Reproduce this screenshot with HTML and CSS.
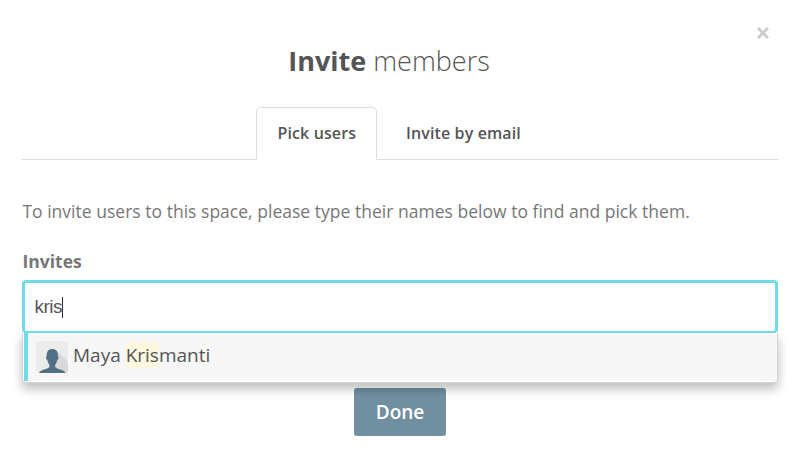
FILE: index.html
```html
<!DOCTYPE html>
<html lang="en">
<head>
<meta charset="utf-8">
<title>Invite members</title>
<link rel="stylesheet" href="styles.css">
</head>
<body>
<main class="modal">
  <button class="close" aria-label="Close"><svg width="14" height="14" viewBox="0 0 14 14"><path d="M2 2L12 12M12 2L2 12"/></svg></button>
  <h1 class="title"><strong>Invite</strong> <span>members</span></h1>
  <nav class="tabs">
    <a class="tab active">Pick users</a>
    <a class="tab">Invite by email</a>
  </nav>
  <p class="intro">To invite users to this space, please type their names below to find and pick them.</p>
  <div class="label">Invites</div>
  <div class="picker">
    <div class="field"><span class="query">kris</span><span class="caret"></span></div>
    <div class="results">
      <div class="result">
        <svg class="avatar" width="32" height="32" viewBox="0 0 32 32">
          <rect width="32" height="32" rx="3" fill="#ebebeb"/>
          <path d="M21 10L32 21V29Q32 32 29 32H17Z" fill="#d9d9d9"/>
          <path d="M16.300 8C12.500 8 10.500 10.500 10.700 15C9.500 15 10 18.500 11.400 19C11.800 21 12.500 22.500 13.300 23.500V26C12 28.500 4.500 28 3 32H29.500C28 28 20.500 28.500 19.200 26V23.500C20.200 22.500 20.800 21 21.200 19C22.700 18.500 23 15 21.900 15C22.200 10.500 20 8 16.300 8Z" fill="#527084"/>
        </svg>
        <span class="name">Maya <mark>Kris</mark>manti</span>
      </div>
    </div>
  </div>
  <button class="done">Done</button>
</main>
</body>
</html>
```
FILE: styles.css
```css
* { box-sizing: border-box; }
body {
  margin: 0;
  background: #fff;
  color: #555;
  font-family: "Open Sans", sans-serif;
}
.modal {
  position: relative;
  display: flex;
  flex-direction: column;
  width: 799px;
  height: 472px;
  padding: 41px 21px 0 22px;
}
.close {
  position: absolute;
  top: 26px;
  right: 29px;
  width: 14px;
  height: 14px;
  padding: 0;
  border: 0;
  background: none;
}
.close svg { display: block; }
.close path { stroke: #ccc; stroke-width: 2.8; fill: none; }
.title {
  margin: 0 0 26px;
  padding-right: 22px;
  height: 40px;
  line-height: 40px;
  font-size: 27px;
  font-weight: 300;
  text-align: center;
  white-space: nowrap;
}
.title strong { font-weight: 700; }
.tabs {
  display: flex;
  gap: 7.5px;
  height: 53px;
  padding-left: 234px;
  border-bottom: 1px solid #ddd;
}
.tab {
  height: 53px;
  padding: 0 20px 0 20.5px;
  border: 1px solid transparent;
  border-radius: 5px 5px 0 0;
  font-size: 16px;
  font-weight: 560;
  letter-spacing: .12px;
  line-height: 50px;
  white-space: nowrap;
}
.tab.active {
  width: 121px;
  border-color: #ddd;
  border-bottom-color: #fff;
  background: #fff;
}
.intro {
  margin: 38px 0 0;
  padding-left: .4px;
  font-size: 17.5px;
  font-weight: 370;
  line-height: 26px;
  letter-spacing: .02px;
  color: #777;
  white-space: nowrap;
}
.label {
  margin-top: 24px;
  padding-left: .5px;
  height: 32px;
  line-height: 26px;
  font-size: 17.5px;
  font-weight: 700;
  color: #777;
}
.picker { position: relative; height: 53px; }
.field {
  display: flex;
  align-items: center;
  height: 53px;
  padding-left: 9.5px;
  border: 3px solid #6fdbe8;
  border-bottom-width: 2px;
  border-radius: 4px;
  font-family: "Liberation Sans", sans-serif;
  font-size: 19px;
  letter-spacing: -.5px;
}
.caret { width: 1px; height: 21px; background: #333; }
.results {
  position: absolute;
  top: 53px;
  left: 0;
  right: 0;
  height: 50px;
  padding: 0 0 1px 1px;
  border: 1px solid #d4d4d4;
  border-top: 0;
  border-radius: 0 0 4px 4px;
  background: #fff;
  box-shadow: 0 6px 12px rgba(0, 0, 0, .175), 0 5px 10px rgba(0, 0, 0, .1);
  clip-path: inset(0 -20px -30px -20px);
}
.result {
  display: flex;
  height: 48px;
  padding: 8px 0 0 8px;
  border-left: 4px solid #6fdbe8;
  background: #f7f7f7;
}
.avatar { flex: none; }
.name {
  margin-left: 5px;
  line-height: 28px;
  font-size: 19px;
  font-weight: 370;
  white-space: nowrap;
}
.name mark { background: #fff8e0; color: inherit; }
.done {
  align-self: center;
  width: 92px;
  height: 48px;
  margin: 55px 0 0;
  padding: 0;
  border: 0;
  border-radius: 3px;
  background: #708fa0;
  color: #fff;
  font: 600 19px "Open Sans", sans-serif;
}
```
